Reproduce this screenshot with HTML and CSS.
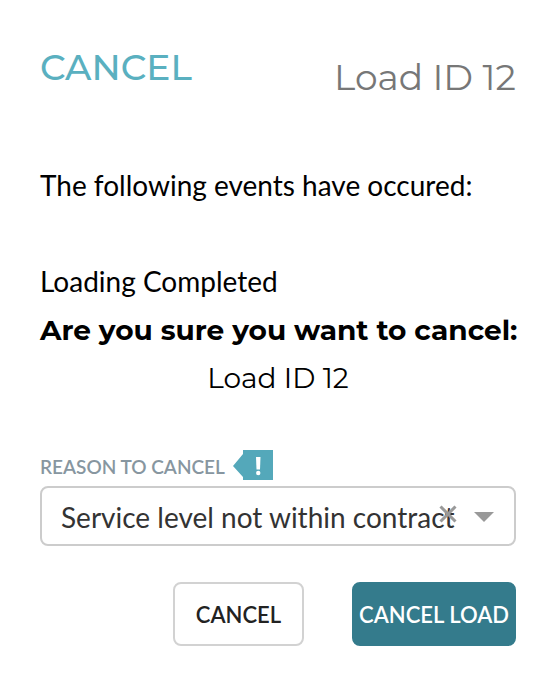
FILE: index.html
```html
<!DOCTYPE html>
<html lang="en">
<head>
    <meta charset="UTF-8">
    <meta name="viewport" content="width=device-width, initial-scale=1.0">
    <title>Cancel Load</title>
    <link rel="stylesheet" href="styles.css">
</head>
<body>
    <form class="cancel-form">
        <header class="header">
            <h1>CANCEL</h1>
            <span class="load-id">Load ID 12</span>
        </header>

        <div class="events">
            <p>The following events have occured:</p>
            <p>Loading Completed</p>
        </div>

        <div class="confirm">
            <h2>Are you sure you want to cancel:</h2>
            <p>Load ID 12</p>
        </div>

        <div class="field">
            <div class="field-label">
                <label for="reason">REASON TO CANCEL</label>
                <svg class="required" viewBox="0 0 40 30" role="img" aria-label="Required">
                    <path d="M0 16 L10 4 V0 H40 V30 H10 V27 Z" fill="#54a8ba"/>
                    <path d="M23 7 H27.5 L27 19.5 H23.5 Z" fill="#fff"/>
                    <circle cx="25.25" cy="23" r="2.2" fill="#fff"/>
                </svg>
            </div>
            <div class="select-box">
                <select id="reason" name="reason">
                    <option>Service level not within contract</option>
                </select>
                <button type="button" class="clear" aria-label="Clear">
                    <svg viewBox="0 0 18 18"><path d="M1.5 1.5 L16.5 16.5 M16.5 1.5 L1.5 16.5" stroke="#999" stroke-width="3"/></svg>
                </button>
                <svg class="caret" viewBox="0 0 20 10"><path d="M0 0 H20 L10 10 Z" fill="#999"/></svg>
            </div>
        </div>

        <div class="actions">
            <button type="button" class="btn">CANCEL</button>
            <button type="submit" class="btn btn-primary">CANCEL LOAD</button>
        </div>
    </form>
</body>
</html>
```
FILE: styles.css
```css
* {
    box-sizing: border-box;
}
body {
    margin: 0;
    background-color: #fff;
    color: #000;
    font-family: Lato, sans-serif;
    font-size: 28px;
    line-height: 48px;
}
h1, h2, p {
    margin: 0;
}
.cancel-form {
    padding: 43px 44px 44px 40px;
}
.header {
    display: flex;
    justify-content: space-between;
}
h1, h2, .load-id, .confirm p {
    font-family: Montserrat, Inter, sans-serif;
}
h1 {
    color: #5ab0c0;
    font-size: 36px;
    font-weight: 500;
}
.load-id {
    padding-top: 10px;
    color: #777;
    font-size: 36px;
}
.events {
    display: grid;
    gap: 48px;
    padding-top: 60px;
}
.confirm {
    padding-top: 1px;
    text-align: center;
    white-space: nowrap;
}
h2 {
    font-size: 28px;
    font-weight: 700;
}
.field {
    padding-top: 48px;
}
.field-label {
    display: flex;
    align-items: flex-start;
    gap: 8px;
    height: 36px;
    color: #8796a0;
    font-size: 19px;
    font-weight: 600;
    line-height: 34px;
}
.required {
    width: 40px;
    height: 30px;
}
.select-box {
    position: relative;
}
select {
    display: block;
    width: 100%;
    height: 60px;
    padding: 2px 20px 0 19px;
    border: 2px solid #ccc;
    border-radius: 8px;
    background: #fff;
    color: #333;
    font: inherit;
    appearance: none;
}
.clear, .caret {
    position: absolute;
}
.clear {
    top: 19px;
    right: 59px;
    padding: 0;
    border: 0;
    background: none;
    line-height: 0;
}
.clear svg {
    width: 18px;
    height: 18px;
}
.caret {
    top: 26px;
    right: 22px;
    width: 20px;
    height: 10px;
    pointer-events: none;
}
.actions {
    display: flex;
    justify-content: flex-end;
    gap: 48px;
    padding-top: 36px;
}
.btn {
    height: 64px;
    padding: 0 21px;
    border: 2px solid #d2d2d2;
    border-radius: 8px;
    background: #fff;
    color: #222;
    font-family: inherit;
    font-size: 22px;
    font-weight: 600;
}
.btn-primary {
    padding: 0 5px;
    border-color: #347b8c;
    background: #347b8c;
    color: #fff;
}
```
